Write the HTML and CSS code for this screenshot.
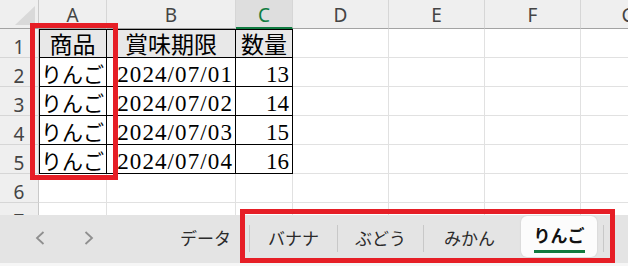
FILE: index.html
```html
<!DOCTYPE html>
<html lang="ja">
<head>
    <meta charset="UTF-8">
    <title>りんご</title>
    <link rel="stylesheet" href="styles.css">
</head>
<body>

<div class="sheet">
    <div class="grid">
        <div class="corner"><span class="tri"></span></div>
        <div class="ch">A</div>
        <div class="ch">B</div>
        <div class="ch active">C</div>
        <div class="ch">D</div>
        <div class="ch">E</div>
        <div class="ch">F</div>
        <div class="ch">G</div>

        <div class="rh">1</div>
        <div class="c t hd colA center">商品</div>
        <div class="c t hd center">賞味期限</div>
        <div class="c t hd center">数量</div>
        <div class="c"></div><div class="c"></div><div class="c"></div><div class="c"></div>

        <div class="rh">2</div>
        <div class="c t colA kana">りんご</div>
        <div class="c t right date">2024/07/01</div>
        <div class="c t right">13</div>
        <div class="c"></div><div class="c"></div><div class="c"></div><div class="c"></div>

        <div class="rh">3</div>
        <div class="c t colA kana">りんご</div>
        <div class="c t right date">2024/07/02</div>
        <div class="c t right">14</div>
        <div class="c"></div><div class="c"></div><div class="c"></div><div class="c"></div>

        <div class="rh">4</div>
        <div class="c t colA kana">りんご</div>
        <div class="c t right date">2024/07/03</div>
        <div class="c t right">15</div>
        <div class="c"></div><div class="c"></div><div class="c"></div><div class="c"></div>

        <div class="rh">5</div>
        <div class="c t colA kana">りんご</div>
        <div class="c t right date">2024/07/04</div>
        <div class="c t right">16</div>
        <div class="c"></div><div class="c"></div><div class="c"></div><div class="c"></div>

        <div class="rh">6</div>
        <div class="c"></div><div class="c"></div><div class="c"></div>
        <div class="c"></div><div class="c"></div><div class="c"></div><div class="c"></div>

        <div class="rh">7</div>
        <div class="c"></div><div class="c"></div><div class="c"></div>
        <div class="c"></div><div class="c"></div><div class="c"></div><div class="c"></div>
    </div>
</div>

<div class="tabbar">
    <div class="nav">
        <svg width="10" height="14" viewBox="0 0 10 14"><path d="M8.5 1 L2 7 L8.5 13" fill="none" stroke="#8f8f8f" stroke-width="1.8"/></svg>
        <svg width="10" height="14" viewBox="0 0 10 14"><path d="M1.5 1 L8 7 L1.5 13" fill="none" stroke="#8f8f8f" stroke-width="1.8"/></svg>
    </div>
    <div class="tabs">
        <span class="tab">データ</span>
        <span class="sep"></span>
        <span class="tab">バナナ</span>
        <span class="sep"></span>
        <span class="tab narrow">ぶどう</span>
        <span class="sep"></span>
        <span class="tab wide">みかん</span>
        <span class="tab current"><span class="label">りんご</span></span>
        <span class="sep"></span>
    </div>
</div>
<div class="strip"></div>

<div class="mark mark-col"></div>
<div class="mark mark-tabs"></div>

</body>
</html>
```

FILE: styles.css
```css
* {
    box-sizing: border-box;
}
body {
    margin: 0;
    width: 628px;
    height: 266px;
    overflow: hidden;
    position: relative;
    background: #ffffff;
    font-family: "Noto Sans", sans-serif;
}
.sheet {
    height: 215px;
    overflow: hidden;
}
.grid {
    display: grid;
    grid-template-columns: 39px 68px 129px 57px 96px 96px 96px 96px;
    grid-auto-rows: 29px;
    width: 677px;
}
.corner {
    background: #efefef;
    border-right: 1px solid #c9c9c9;
    border-bottom: 1px solid #a3a3a3;
    display: flex;
    justify-content: flex-end;
    align-items: flex-end;
    padding: 0 3px 3px 0;
}
.tri {
    width: 20px;
    height: 19px;
    background: #d9d9d9;
    clip-path: polygon(100% 0, 100% 100%, 0 100%);
}
.ch {
    background: #efefef;
    border-right: 1px solid #d6d6d6;
    border-bottom: 1px solid #a3a3a3;
    color: #444444;
    font-size: 19px;
    line-height: 20px;
    padding-top: 5px;
    text-align: center;
}
.ch.active {
    background: #dedede;
    color: #107c41;
    border-bottom: 2px solid #107c41;
}
.rh {
    background: #efefef;
    border-right: 1px solid #c9c9c9;
    border-bottom: 1px solid #d6d6d6;
    color: #444444;
    font-size: 19px;
    line-height: 20px;
    padding-top: 8px;
    text-align: center;
}
.c {
    border-right: 1px solid #e1e1e1;
    border-bottom: 1px solid #e1e1e1;
    font-family: "Liberation Serif", "Noto Sans CJK JP", serif;
    font-size: 23px;
    line-height: 22px;
    padding: 6px 3px 0;
    color: #000000;
    white-space: nowrap;
}
.c.t {
    border-right-color: #000000;
    border-bottom-color: #000000;
}
.c.hd {
    background: #e8e8e8;
    box-shadow: inset 0 1px #000000;
}
.c.colA {
    box-shadow: inset 1px 0 #000000;
}
.c.hd.colA {
    box-shadow: inset 1px 1px #000000;
}
.center {
    text-align: center;
}
.right {
    text-align: right;
}
.date {
    letter-spacing: 1.1px;
    padding-right: 2px;
}
.kana {
    font-size: 21px;
    padding-left: 2px;
}

.tabbar {
    height: 48px;
    background: #e4e4e4;
    display: flex;
    font-family: "Noto Sans CJK JP", sans-serif;
}
.nav {
    width: 162px;
    display: flex;
    align-items: center;
    gap: 39px;
    padding: 0 0 2px 35px;
}
.tabs {
    display: flex;
    align-items: center;
    height: 100%;
}
.tab {
    width: 87px;
    font-size: 17px;
    line-height: 17px;
    color: #2b2b2b;
    text-align: center;
    padding-bottom: 3px;
}
.tab.narrow {
    width: 85px;
}
.tab.wide {
    width: 91px;
}
.sep {
    width: 1px;
    height: 27px;
    background: #c8c8c8;
    margin-bottom: 1px;
}
.tab.current {
    align-self: flex-start;
    width: 76px;
    height: 41px;
    margin: 1px 6px 0;
    padding-top: 10px;
    background: #fcfcfc;
    border-radius: 6px;
    box-shadow: 0 0 2px rgba(0, 0, 0, 0.12);
}
.tab.current .label {
    display: inline-block;
    font-weight: 700;
    color: #111111;
    padding-bottom: 7px;
    border-bottom: 3px solid #137a3f;
}
.strip {
    height: 3px;
    background: #f6f6f6;
}

/* annotation boxes */
.mark {
    position: absolute;
    border: 5px solid #e61e26;
}
.mark-col {
    left: 30px;
    top: 23px;
    width: 88px;
    height: 157px;
}
.mark-tabs {
    left: 240px;
    top: 209px;
    width: 375px;
    height: 54px;
}
```
